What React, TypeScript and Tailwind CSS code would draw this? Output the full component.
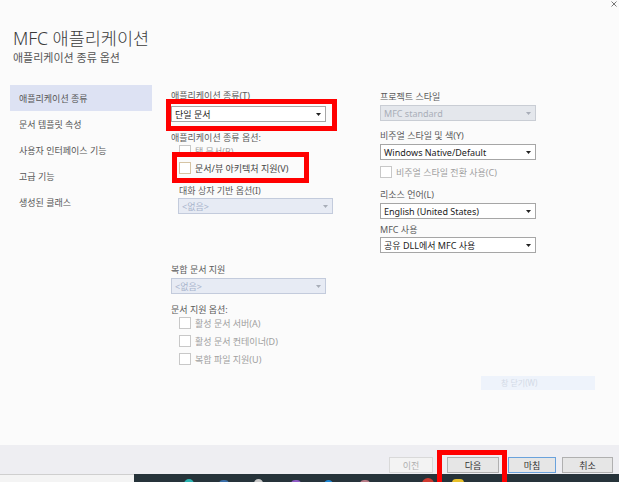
import React from "react";

const FONT = { fontFamily: '"Noto Sans", "Noto Sans CJK KR", sans-serif' };

function Arrow({ disabled }: { disabled?: boolean }) {
  return (
    <svg width="5" height="3" viewBox="0 0 5 3" className="shrink-0">
      <path d="M0 0 L5 0 L2.5 3 Z" fill={disabled ? "#a8adb8" : "#222"} />
    </svg>
  );
}

function Select({
  value,
  w,
  variant = "normal",
  className = "",
}: {
  value: string;
  w: string;
  variant?: "normal" | "gray" | "blue";
  className?: string;
}) {
  const styles =
    variant === "normal"
      ? "bg-white border-[#a6a6a6] text-[#222]"
      : variant === "gray"
      ? "bg-[#e4e7ec] border-[#c9cdd4] text-[#a9aeb8]"
      : "bg-[#e7ebf4] border-[#c3cbdc] text-[#a9b4cc]";
  return (
    <div
      className={`h-[16px] border flex items-center justify-between pl-[3px] pr-[4px] text-[9px] leading-none ${styles} ${w} ${className}`}
    >
      <span>{value}</span>
      <Arrow disabled={variant !== "normal"} />
    </div>
  );
}

function Check({
  label,
  className = "",
  tan,
}: {
  label: string;
  className?: string;
  tan?: boolean;
}) {
  return (
    <div className={`h-[12px] flex items-center ${className}`}>
      <div
        className={`w-[12px] h-[12px] border bg-white shrink-0 ${
          tan ? "border-[#d6c4a4]" : "border-[#c8c8c8]"
        }`}
      />
      <span
        className={`ml-[4px] text-[9px] leading-none ${
          tan ? "text-[#444]" : "text-[#a0a0a0]"
        }`}
      >
        {label}
      </span>
    </div>
  );
}

function Label({ children, className = "" }: { children: React.ReactNode; className?: string }) {
  return (
    <div className={`h-[12px] flex items-center text-[9px] leading-none text-[#5a5a5a] ${className}`}>
      {children}
    </div>
  );
}

const sideItems = [
  "애플리케이션 종류",
  "문서 템플릿 속성",
  "사용자 인터페이스 기능",
  "고급 기능",
  "생성된 클래스",
];

function Btn({
  label,
  w,
  kind = "normal",
  className = "",
}: {
  label: string;
  w: string;
  kind?: "normal" | "disabled" | "default";
  className?: string;
}) {
  const s =
    kind === "disabled"
      ? "bg-[#f3f3f3] border-[#d9d9d9] text-[#b0b0b0]"
      : kind === "default"
      ? "bg-[#e6e6e6] border-[#6aa2dc] text-[#333]"
      : "bg-[#e6e6e6] border-[#b0b0b0] text-[#333]";
  return (
    <div
      className={`h-[16px] border flex items-center justify-center text-[9px] leading-none ${s} ${w} ${className}`}
    >
      {label}
    </div>
  );
}

export default function App() {
  return (
    <div
      className="w-[619px] h-[482px] relative overflow-hidden bg-[#fbfbfb] flex flex-col"
      style={FONT}
    >
      {/* close glyph */}
      <svg className="absolute right-[2px] top-[1px]" width="6" height="6" viewBox="0 0 6 6">
        <path d="M0.5 0.5 L5.5 5.5 M5.5 0.5 L0.5 5.5" stroke="#777" strokeWidth="1" />
      </svg>

      {/* main */}
      <div className="h-[445px] flex flex-col">
        <div className="h-[85px] pt-[28px] pl-[13px]">
          <div className="text-[17.5px] leading-[21px] text-[#3a3a3a] font-light">MFC 애플리케이션</div>
          <div className="text-[11px] leading-[14px] text-[#555] mt-[2px]">애플리케이션 종류 옵션</div>
        </div>

        <div className="flex">
          {/* sidebar */}
          <div className="w-[152px] pl-[10px] flex flex-col">
            {sideItems.map((t, i) => (
              <div
                key={t}
                className={`h-[26px] flex items-center pl-[9px] text-[9px] leading-none text-[#555] ${
                  i === 0 ? "bg-[#dde2f3]" : ""
                }`}
              >
                {t}
              </div>
            ))}
          </div>

          {/* middle column */}
          <div className="ml-[19px] w-[165px] flex flex-col pt-[4px]">
            <Label>애플리케이션 종류(T)</Label>
            <Select value="단일 문서" w="w-[155px]" className="mt-[5px]" />
            <Label className="mt-[9px]">애플리케이션 종류 옵션:</Label>
            <Check label="탭 문서(B)" className="mt-[2px] ml-[8px]" />
            <Check label="문서/뷰 아키텍처 지원(V)" className="mt-[5px] ml-[8px]" tan />
            <Label className="mt-[10px] ml-[8px]">대화 상자 기반 옵션(I)</Label>
            <Select value="<없음>" w="w-[155px]" variant="blue" className="mt-[2px] ml-[7px]" />
            <Label className="mt-[49px]">복합 문서 지원</Label>
            <Select value="<없음>" w="w-[155px]" variant="blue" className="mt-[3px]" />
            <Label className="mt-[9px]">문서 지원 옵션:</Label>
            <Check label="활성 문서 서버(A)" className="mt-[2px] ml-[8px]" />
            <Check label="활성 문서 컨테이너(D)" className="mt-[6px] ml-[8px]" />
            <Check label="복합 파일 지원(U)" className="mt-[6px] ml-[8px]" />
          </div>

          {/* right column */}
          <div className="ml-[44px] w-[220px] flex flex-col pt-[5px]">
            <Label>프로젝트 스타일</Label>
            <Select value="MFC standard" w="w-[156px]" variant="gray" className="mt-[3px]" />
            <Label className="mt-[8px]">비주얼 스타일 및 색(Y)</Label>
            <Select value="Windows Native/Default" w="w-[156px]" className="mt-[3px]" />
            <Check label="비주얼 스타일 전환 사용(C)" className="mt-[6px]" />
            <Label className="mt-[10px]">리소스 언어(L)</Label>
            <Select value="English (United States)" w="w-[156px]" className="mt-[3px]" />
            <Label className="mt-[4px]">MFC 사용</Label>
            <Select value="공유 DLL에서 MFC 사용" w="w-[156px]" className="mt-[2px]" />
            <div className="mt-[123px] ml-[101px] w-[114px] h-[14px] bg-[#eef3fb] flex items-center pl-[20px] text-[8px] leading-none text-[#d3dae6]">
              창 닫기(W)
            </div>
          </div>
        </div>
      </div>

      {/* bottom bar */}
      <div className="h-[29px] bg-[#eeeef2] flex items-start pt-[12px]">
        <Btn label="이전" w="w-[44px]" kind="disabled" className="ml-[389px]" />
        <Btn label="다음" w="w-[52px]" className="ml-[14px]" />
        <Btn label="마침" w="w-[48px]" kind="default" className="ml-[9px]" />
        <Btn label="취소" w="w-[51px]" className="ml-[6px]" />
      </div>

      {/* taskbar strip */}
      <div className="h-[8px] flex">
        <div className="w-[134px] bg-[#f4f4f4] border-t border-[#cfcfcf]" />
        <div className="flex-1 bg-[#26333a] relative overflow-hidden">
          <div className="absolute left-[50px] top-[5px] w-[10px] h-[10px] rounded-full bg-[#2bb3b1]" />
          <div className="absolute left-[85px] top-[6px] w-[10px] h-[10px] rounded-sm bg-[#3a6ea8]" />
          <div className="absolute left-[120px] top-[5px] w-[9px] h-[9px] rounded-full bg-[#c8c8c8]" />
          <div className="absolute left-[157px] top-[6px] w-[10px] h-[10px] rounded-sm bg-[#8e5bc4]" />
          <div className="absolute left-[190px] top-[6px] w-[9px] h-[9px] rounded-full bg-[#1e88d6]" />
          <div className="absolute left-[226px] top-[6px] w-[10px] h-[10px] rounded-sm bg-[#b77b86]" />
          <div className="absolute left-[288px] top-[4px] w-[12px] h-[12px] rounded-full bg-[#d03a2f]" />
          <div className="absolute left-[318px] top-[5px] w-[12px] h-[12px] rounded-sm bg-[#e8c02a]" />
        </div>
      </div>

      {/* red highlight boxes */}
      <div className="absolute left-[166px] top-[99px] w-[171px] h-[32px] border-[5px] border-[#ff0000]" />
      <div className="absolute left-[172px] top-[152px] w-[137px] h-[31px] border-[5px] border-[#ff0000]" />
      <div className="absolute left-[437px] top-[450px] w-[70px] h-[40px] border-[5px] border-[#ff0000]" />
    </div>
  );
}
